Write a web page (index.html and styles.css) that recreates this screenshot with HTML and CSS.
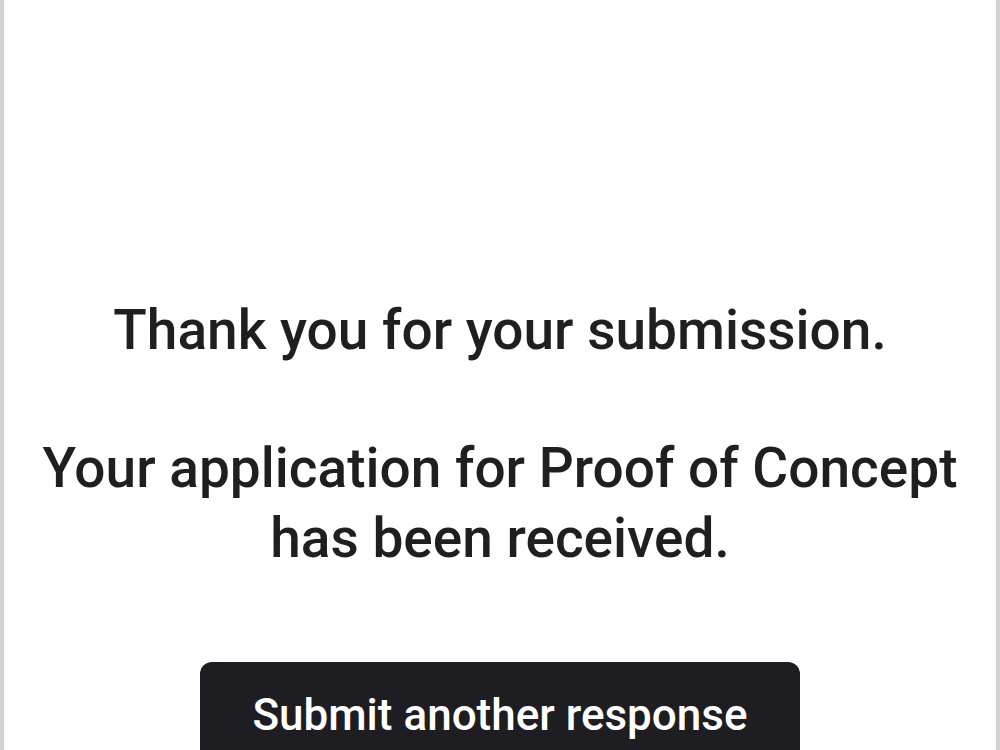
FILE: index.html
```html
<!DOCTYPE html>
<html>
<head>
<meta charset="utf-8">
<link rel="stylesheet" href="styles.css">
</head>
<body>
<div class="frame">
  <div class="content">
    <p class="msg">Thank you for your submission.</p>
    <p class="msg">Your application for Proof of Concept<br>has been received.</p>
    <button class="btn">Submit another response</button>
  </div>
</div>
</body>
</html>
```

FILE: styles.css
```css
html, body {
  margin: 0;
  padding: 0;
  background: #ffffff;
  height: 100%;
  overflow: hidden;
}
.frame {
  box-sizing: border-box;
  height: 750px;
  border-left: 4px solid #d4d4d4;
  border-right: 4px solid #d4d4d4;
  font-family: Roboto, "Noto Sans", sans-serif;
  color: #1f1f22;
}
.content {
  display: flex;
  flex-direction: column;
  align-items: center;
  padding-top: 295px;
}
.msg {
  margin: 0 0 68px 0;
  font-size: 55px;
  font-weight: 500;
  line-height: 70px;
  text-align: center;
}
.btn {
  margin-top: 21px;
  width: 600px;
  height: 110px;
  border: none;
  border-radius: 12px;
  background: #1e1e22;
  color: #ffffff;
  font-family: Roboto, "Noto Sans", sans-serif;
  font-size: 44px;
  font-weight: 500;
  line-height: 44px;
  padding: 31px 0 0 0;
  display: flex;
  justify-content: center;
  align-items: flex-start;
}
```
